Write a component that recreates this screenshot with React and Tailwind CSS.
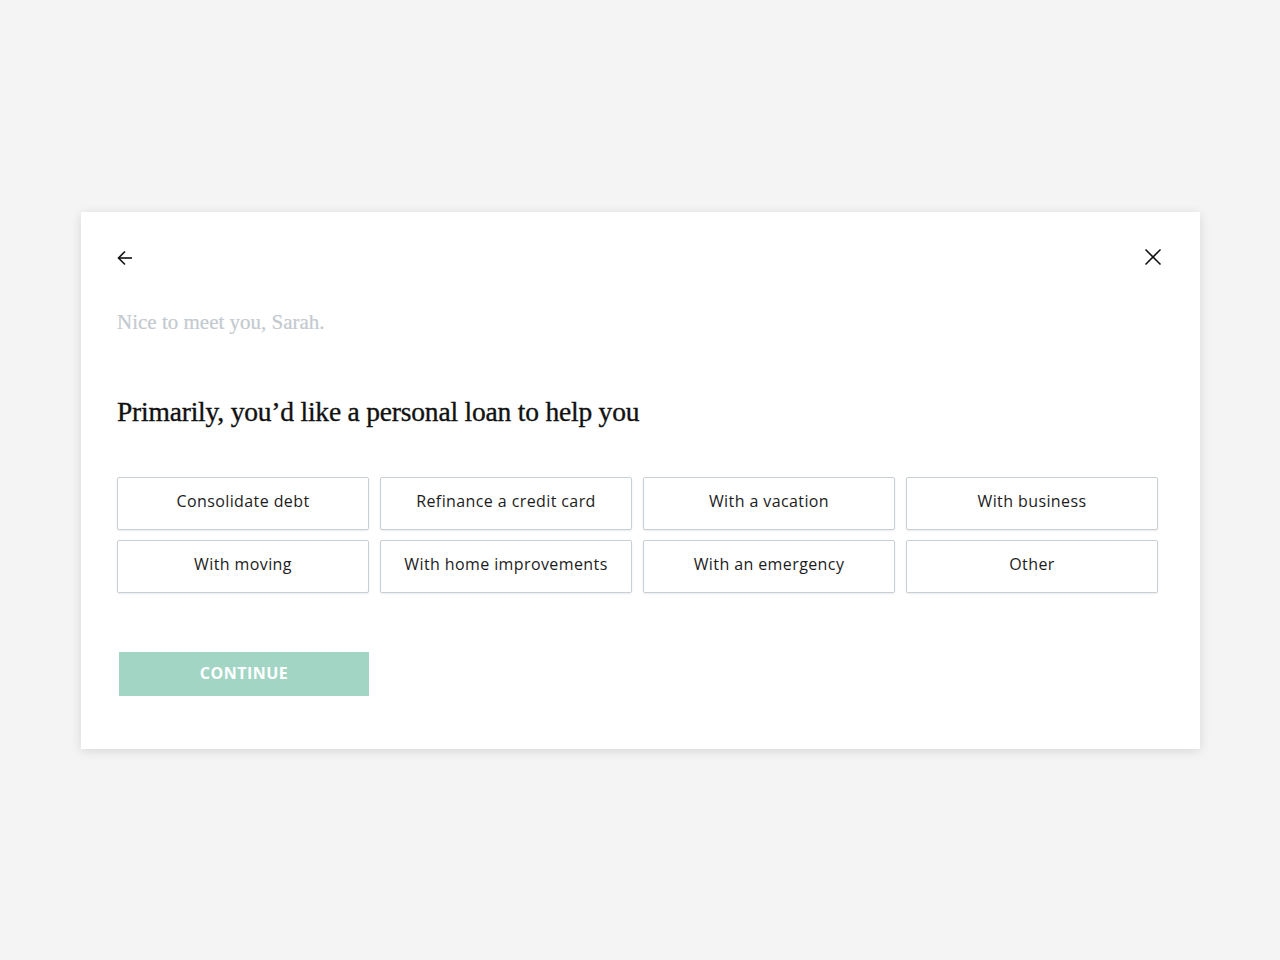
import React, { useState } from 'react';

const options = [
  'Consolidate debt',
  'Refinance a credit card',
  'With a vacation',
  'With business',
  'With moving',
  'With home improvements',
  'With an emergency',
  'Other',
];

const serif = { fontFamily: '"Liberation Serif", "DejaVu Serif", serif' };
const sans = { fontFamily: '"Open Sans", "Liberation Sans", sans-serif' };

const ArrowLeft = () => (
  <svg width="18" height="18" viewBox="0 0 18 18" fill="none" stroke="#111" strokeWidth="1.6">
    <path d="M16 9H2.5" />
    <path d="M9 2.5L2.5 9L9 15.5" />
  </svg>
);

const CloseIcon = () => (
  <svg width="18" height="18" viewBox="0 0 18 18" fill="none" stroke="#111" strokeWidth="1.6">
    <path d="M1.5 1.5L16.5 16.5" />
    <path d="M16.5 1.5L1.5 16.5" />
  </svg>
);

const App = () => {
  const [selected, setSelected] = useState(null);

  return (
    <div className="min-h-screen bg-[#f4f4f4] pt-[212px]">
      <div className="ml-[81px] w-[1119px] bg-white pl-[36px] pr-[38px] pt-[37px] pb-[53px] shadow-[0_2px_10px_rgba(0,0,0,0.12)]">
        <div className="flex items-center justify-between h-[18px]">
          <button className="-ml-[1px]"><ArrowLeft /></button>
          <button className="-mt-[2px]"><CloseIcon /></button>
        </div>

        <p className="mt-[43px] text-[21px] leading-[24px] text-[#c3cacf] [-webkit-text-stroke:0.2px_#c3cacf]" style={serif}>
          Nice to meet you, Sarah.
        </p>

        <h1 className="mt-[62px] text-[27.5px] leading-[32px] text-[#111] tracking-[-0.2px] [-webkit-text-stroke:0.35px_#111]" style={serif}>
          Primarily, you’d like a personal loan to help you
        </h1>

        <div className="mt-[49px] grid w-[1041px] grid-cols-4 gap-x-[11px] gap-y-[10px]">
          {options.map((opt) => (
            <button
              key={opt}
              onClick={() => setSelected(opt)}
              className={`h-[53px] pb-[5px] rounded-[2px] border bg-white text-[16px] text-[#1c1c1c] tracking-[0.4px] shadow-[0_1px_2px_rgba(0,0,0,0.08)] ${
                selected === opt ? 'border-[#5fbf9f]' : 'border-[#c9d0d5]'
              }`}
              style={sans}
            >
              {opt}
            </button>
          ))}
        </div>

        <button
          className="mt-[59px] ml-[2px] flex h-[44px] w-[250px] items-center justify-center pb-[3px] bg-[#a2d5c4] text-[16px] font-bold uppercase tracking-[0.5px] text-white"
          style={sans}
        >
          Continue
        </button>
      </div>
    </div>
  );
};

export default App;
